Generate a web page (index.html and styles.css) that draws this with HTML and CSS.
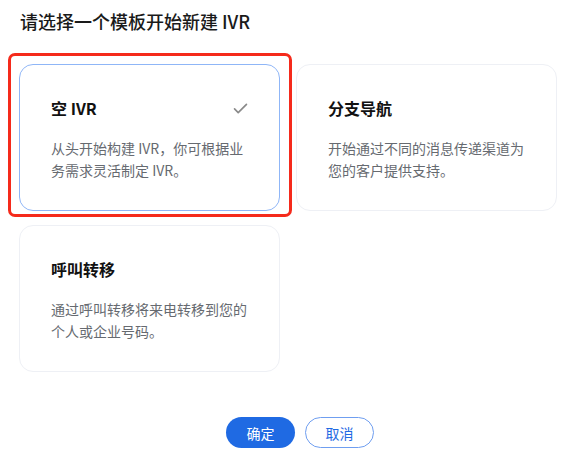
FILE: index.html
```html
<!DOCTYPE html>
<html>

<head>
	<meta charset="utf-8" />
	<meta name="viewport" content="width=device-width">
	<link rel="stylesheet" href="styles.css">
</head>

<body>
	<div class="dialog">
		<h2 class="dialog-title">请选择一个模板开始新建 IVR</h2>

		<div class="template-grid">
			<div class="template-card selected">
				<div class="card-head">
					<span class="card-title">空 IVR</span>
					<svg class="check" viewBox="0 0 16 12">
						<path d="M1.5 6.5l4 4L14.5 1.5" fill="none" stroke="#8a8a8a" stroke-width="1.8" stroke-linecap="round" stroke-linejoin="round" />
					</svg>
				</div>
				<p class="card-desc">从头开始构建 IVR，你可根据业务需求灵活制定 IVR。</p>
			</div>

			<div class="template-card">
				<div class="card-head">
					<span class="card-title">分支导航</span>
				</div>
				<p class="card-desc">开始通过不同的消息传递渠道为您的客户提供支持。</p>
			</div>

			<div class="template-card">
				<div class="card-head">
					<span class="card-title">呼叫转移</span>
				</div>
				<p class="card-desc">通过呼叫转移将来电转移到您的个人或企业号码。</p>
			</div>
		</div>

		<div class="dialog-footer">
			<button class="btn btn-primary">确定</button>
			<button class="btn btn-ghost">取消</button>
		</div>
	</div>
</body>

</html>
```

FILE: styles.css
```css
body {
	margin: 0;
	background: #ffffff;
	font-family: "Noto Sans CJK SC", "Noto Sans", sans-serif;
	color: #1a1a1a;
}

.dialog {
	padding: 8px 0 0 20px;
}

.dialog-title {
	margin: 0;
	font-size: 18px;
	font-weight: 500;
	line-height: 26px;
	color: #1a1a1a;
}

.template-grid {
	display: grid;
	grid-template-columns: 261px 261px;
	column-gap: 16px;
	row-gap: 14px;
	margin-top: 30px;
	margin-left: -1px;
}

.template-card {
	position: relative;
	box-sizing: border-box;
	height: 147px;
	padding: 31px 30px 0 31px;
	border: 1px solid #eef0f5;
	border-radius: 14px;
	background: #fff;
}

.template-card.selected {
	border-color: #8fb6f7;
}

.template-card.selected::before {
	content: "";
	position: absolute;
	top: -12px;
	left: -12px;
	right: -13px;
	bottom: -7px;
	border: 3px solid #f52a1b;
	border-radius: 7px;
	pointer-events: none;
}

.card-head {
	display: flex;
	align-items: center;
	justify-content: space-between;
	height: 24px;
}

.card-title {
	font-size: 16px;
	font-weight: 600;
	color: #111;
}

.check {
	width: 15px;
	height: 11px;
	margin-right: 1px;
}

.card-desc {
	margin: 17px 0 0;
	font-size: 14px;
	line-height: 22px;
	color: #666a70;
}

.dialog-footer {
	display: flex;
	gap: 10px;
	margin-top: 45px;
	padding-left: 206px;
}

.btn {
	box-sizing: border-box;
	width: 69px;
	height: 31px;
	border-radius: 16px;
	font-family: inherit;
	font-size: 14px;
	cursor: pointer;
}

.btn-primary {
	border: none;
	background: #1f6ae3;
	color: #fff;
}

.btn-ghost {
	border: 1px solid #6f9ef0;
	background: #fff;
	color: #1f6ae3;
}
```
